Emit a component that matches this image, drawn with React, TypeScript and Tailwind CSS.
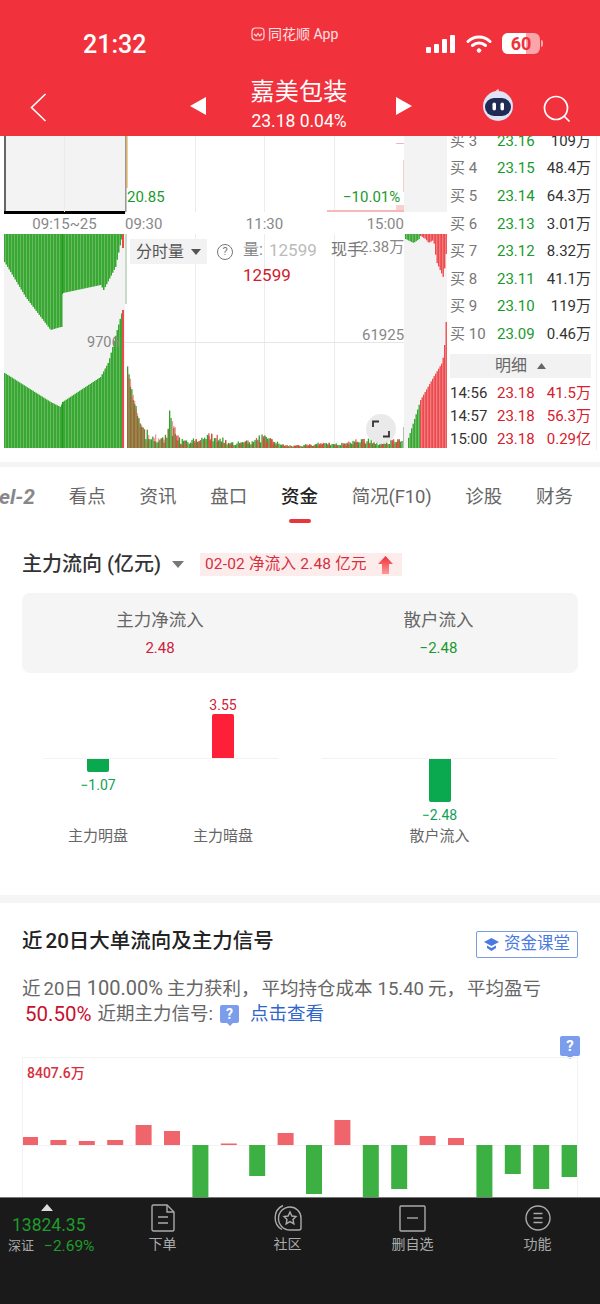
import React from "react";

function rng(seed: number) {
  let s = seed;
  return () => {
    s = (s * 16807) % 2147483647;
    return (s - 1) / 2147483646;
  };
}
function lerp(pts: number[][], x: number) {
  if (x <= pts[0][0]) return pts[0][1];
  for (let i = 1; i < pts.length; i++) {
    if (x <= pts[i][0]) {
      const [a, b] = pts[i - 1];
      const [c, d] = pts[i];
      return b + ((d - b) * (x - a)) / (c - a);
    }
  }
  return pts[pts.length - 1][1];
}
const range = (a: number, b: number, step: number) => {
  const r: number[] = [];
  for (let x = a; x < b; x += step) r.push(x);
  return r;
};

const GREEN = "#38a832";
const RED = "#ee4a4e";

function TopChart() {
  return (
    <svg width={443} height={78} viewBox="4 136 443 78" className="block">
      <rect x={4} y={136} width={123} height={78} fill="#f3f3f3" />
      <rect x={404} y={136} width={43} height={76} fill="#f3f3f3" />
      <rect x={4} y={136} width={2} height={76} fill="#666" />
      <rect x={4} y={211} width={121} height={3} fill="#000" />
      <rect x={64} y={136} width={1} height={76} fill="#ebebeb" />
      <rect x={125} y={136} width={1.5} height={76} fill="#999" />
      <rect x={126.5} y={136} width={1} height={52} fill="#e0a030" />
      {[195, 264, 334].map((x) => (
        <rect key={x} x={x} y={136} width={1} height={76} fill="#ececec" />
      ))}
      <rect x={327} y={210} width={77} height={2} fill="#f6b8b8" />
      <rect x={396} y={143} width={8} height={1} fill="#f4b6b6" />
      <rect x={403} y={160} width={1} height={32} fill="#f6cccc" />
      <rect x={396} y={205} width={8} height={5} fill="#f9d0d0" />
    </svg>
  );
}

function LowerChart() {
  const topGreen = [[4, 262], [25, 297], [50, 330], [60, 327], [61.5, 327], [62.5, 293], [100, 285], [103, 290], [115, 267], [120, 243], [122, 236]];
  const botGreen = [[4, 373], [50, 402], [60, 407], [62, 402], [100, 377], [108, 362], [120, 317], [122, 310]];
  const env = [[127, 96], [130, 70], [133, 51], [140, 25], [150, 15], [160, 12], [167, 14], [169, 41], [173, 25], [180, 10], [200, 10], [208, 15], [217, 14], [230, 6], [250, 8], [262, 15], [270, 10], [285, 3], [300, 3], [320, 6], [340, 5], [362, 11], [380, 6], [400, 11]];
  const r = rng(77);
  const vol = range(127, 402, 1.4).map((x) => {
    const e = lerp(env, x);
    const lo = x < 145 ? 0.85 : 0.4;
    return { x, g: e * (lo + (1 - lo) * r()), d: e * (lo - 0.1 + (1.1 - lo) * r()), red: x < 145 || r() > 0.45 };
  });
  return (
    <svg width={443} height={214} viewBox="4 234 443 214" className="block">
      <rect x={4} y={234} width={121} height={214} fill="#f3f3f3" />
      <rect x={404} y={234} width={43} height={214} fill="#f3f3f3" />
      {[195, 264, 334].map((x) => (
        <rect key={x} x={x} y={234} width={1} height={214} fill="#ececec" />
      ))}
      <rect x={125} y={342} width={279} height={1} fill="#e6e6e6" />
      {range(4, 122, 1.5).map((x) => (
        <g key={x}>
          <rect x={x} y={234} width={1.5} height={lerp(topGreen, x) - 234} fill={GREEN} />
          <rect x={x} y={lerp(botGreen, x)} width={1.5} height={448 - lerp(botGreen, x)} fill={GREEN} />
        </g>
      ))}
      <rect x={62} y={234} width={1} height={60} fill="#1f9a20" />
      <rect x={62} y={402} width={1} height={46} fill="#1f9a20" />
      <rect x={122} y={234} width={2} height={14} fill={RED} />
      <rect x={122} y={310} width={2} height={138} fill={RED} />
      <rect x={125.5} y={234} width={1} height={70} fill="#8fb88f" />
      {vol.map((v) => (
        <g key={v.x}>
          <rect x={v.x} y={448 - v.g} width={1.3} height={v.g} fill="#2f9e2a" />
          {v.red && <rect x={v.x} y={448 - v.d} width={1.3} height={v.d} fill="#ee3e3e" fillOpacity={v.x < 175 ? 0.55 : 0.9} />}
        </g>
      ))}
      <rect x={403} y={427} width={1} height={21} fill="#bbb" />
      {range(405, 420, 1.5).map((x) => (
        <g key={x}>
          <rect x={x} y={234} width={1.4} height={lerp([[405, 5], [413, 9], [420, 4]], x)} fill={GREEN} />
          {x > 407 && <rect x={x} y={lerp([[407, 441], [420, 400]], x)} width={1.4} height={448 - lerp([[407, 441], [420, 400]], x)} fill={GREEN} />}
        </g>
      ))}
      {range(420, 446, 1.5).map((x) => (
        <g key={x}>
          <rect x={x} y={234} width={1.4} height={lerp([[420, 2], [425, 5], [428, 9], [433, 6], [436, 28], [443, 44], [445.5, 20]], x)} fill={RED} />
          <rect x={x} y={lerp([[420, 400], [433, 377], [442, 362], [444, 345], [445, 322]], x)} width={1.4} height={448 - lerp([[420, 400], [433, 377], [442, 362], [444, 345], [445, 322]], x)} fill={RED} />
        </g>
      ))}
    </svg>
  );
}

function Triangle({ dir, cls }: { dir: "l" | "r" | "d" | "u"; cls: string }) {
  const p = { l: "16,0 16,18 0,9", r: "0,0 0,18 16,9", d: "0,0 16,0 8,12", u: "8,0 16,12 0,12" }[dir];
  const vb = dir === "l" || dir === "r" ? "0 0 16 18" : "0 0 16 12";
  return (
    <svg viewBox={vb} className={cls} fill="currentColor" preserveAspectRatio="none">
      <polygon points={p} />
    </svg>
  );
}

function Header() {
  return (
    <div className="h-[136px] shrink-0 bg-[#f1323c] text-white">
      <div className="flex h-[76px] items-start">
        <div className="w-[251px] pl-[83px] pt-[30px] text-[25px] font-medium leading-[30px]">21:32</div>
        <div className="flex w-[175px] items-center gap-[3px] pt-[25px] text-[14px] leading-[18px] text-white/85">
          <svg width={14} height={14} viewBox="0 0 14 14" fill="none" stroke="#ffd9d9" strokeWidth={1.2}>
            <rect x={1} y={1} width={12} height={12} rx={3.5} />
            <path d="M3 7l2.2 2L7 6.5 8.8 9 11 6.5" />
          </svg>
          <span>同花顺 App</span>
        </div>
        <div className="flex items-center pt-[33px]">
          <svg width={30} height={20} viewBox="0 0 30 20" fill="#fff">
            <rect x={0} y={13} width={5} height={6} rx={1} />
            <rect x={8} y={10} width={5} height={9} rx={1} />
            <rect x={16} y={5} width={5} height={14} rx={1} />
            <rect x={24} y={1} width={5} height={18} rx={1} />
          </svg>
          <svg width={26} height={20} viewBox="0 0 26 20" fill="none" stroke="#fff" strokeWidth={3} strokeLinecap="round" className="ml-[10px]">
            <path d="M2 7.5a16 16 0 0 1 22 0" />
            <path d="M6.5 11.5a10 10 0 0 1 13 0" />
            <circle cx={13} cy={16.5} r={1.8} fill="#fff" strokeWidth={1} />
          </svg>
          <div className="relative ml-[10px] flex h-[21px] w-[38px] items-center justify-center overflow-hidden rounded-[6px] bg-[#f9a5a9] text-[18px] font-bold leading-none text-[#f1323c]">
            <div className="absolute inset-y-0 left-0 w-[24px] bg-white" />
            <span className="relative">60</span>
          </div>
          <div className="ml-[1px] h-[7px] w-[2px] rounded-r-sm bg-[#f9a5a9]" />
        </div>
      </div>
      <div className="flex h-[60px] items-start">
        <svg width={17} height={29} viewBox="0 0 17 29" fill="none" stroke="#fff" strokeWidth={1.6} className="ml-[30px] mt-[17px]">
          <path d="M15.5 1L1.5 14.5 15.5 28" />
        </svg>
        <Triangle dir="l" cls="ml-[143px] mt-[21px] h-[18px] w-[16px]" />
        <div className="ml-[38px] flex w-[110px] flex-col items-center">
          <div className="mt-[1px] text-[24px] leading-[31px] tracking-[0.3px]">嘉美包装</div>
          <div className="mt-[1px] text-[17.5px] leading-[24px]">23.18 0.04%</div>
        </div>
        <Triangle dir="r" cls="ml-[42px] mt-[21px] h-[18px] w-[16px]" />
        <svg width={34} height={32} viewBox="0 0 34 32" className="ml-[69px] mt-[13px]">
          <path d="M15 4c0-2 1-3 3-3" stroke="#fbd" strokeWidth={1.5} fill="none" />
          <circle cx={17} cy={17} r={15} fill="#dfe3f4" />
          <rect x={4} y={9} width={26} height={18} rx={9} fill="#1f2a55" />
          <rect x={11.5} y={13.5} width={3.5} height={8} rx={1.75} fill="#fff" />
          <rect x={19.5} y={13.5} width={3.5} height={8} rx={1.75} fill="#fff" />
        </svg>
        <svg width={28} height={28} viewBox="0 0 28 28" fill="none" stroke="#fff" strokeWidth={1.7} className="ml-[28px] mt-[19px]">
          <circle cx={13} cy={13} r={11.5} />
          <path d="M21 21l5.5 5.5" />
        </svg>
      </div>
    </div>
  );
}

const book: [string, string, string][] = [
  ["3", "23.16", "109万"],
  ["4", "23.15", "48.4万"],
  ["5", "23.14", "64.3万"],
  ["6", "23.13", "3.01万"],
  ["7", "23.12", "8.32万"],
  ["8", "23.11", "41.1万"],
  ["9", "23.10", "119万"],
  ["10", "23.09", "0.46万"],
];
const deals = [
  ["14:56", "23.18", "41.5万"],
  ["14:57", "23.18", "56.3万"],
  ["15:00", "23.18", "0.29亿"],
];

function OrderBook() {
  return (
    <div className="h-[314px] w-[148px] overflow-hidden border-r border-[#f0f0f0] text-[15px]">
      <div className="-mt-[8.8px]">
        {book.map(([n, p, v]) => (
          <div key={n} className="flex h-[27.6px] items-center pl-[1px]">
            <span className="w-[47px] text-[#777]">买 {n}</span>
            <span className="text-[#1a9a2c]">{p}</span>
            <span className="ml-auto pr-[5px] text-[#333]">{v}</span>
          </div>
        ))}
      </div>
      <div className="ml-[1px] mt-[6px] flex h-[24px] w-[141px] items-center justify-center gap-[10px] bg-[#f2f2f2] text-[16px] text-[#666]">
        明细
        <Triangle dir="u" cls="h-[6px] w-[9px] text-[#666]" />
      </div>
      <div className="mt-[3.5px]">
        {deals.map(([t, p, v]) => (
          <div key={t} className="flex h-[23px] items-center pl-[1px]">
            <span className="w-[47px] text-[#333]">{t}</span>
            <span className="text-[#d6202c]">{p}</span>
            <span className="ml-auto pr-[5px] text-[#d6202c]">{v}</span>
          </div>
        ))}
      </div>
    </div>
  );
}

function ChartArea() {
  return (
    <div className="flex h-[314px] shrink-0 overflow-hidden">
      <div className="ml-[4px] mr-[2px] w-[443px]">
        <div className="relative h-[78px]">
          <TopChart />
          <span className="absolute left-[123px] top-[52px] text-[15px] leading-[18px] text-[#1a9a2c]">20.85</span>
          <span className="absolute left-[339px] top-[52px] text-[15px] leading-[18px] text-[#1a9a2c]">−10.01%</span>
        </div>
        <div className="flex h-[20px] items-center text-[15px] text-[#888]">
          <span className="w-[121px] pt-[1px] text-center">09:15~25</span>
          <div className="flex w-[279px] justify-between">
            <span>09:30</span>
            <span>11:30</span>
            <span>15:00</span>
          </div>
        </div>
        <div className="relative h-[214px]">
          <LowerChart />
          <div className="absolute left-[126px] top-[5px] flex h-[25px] w-[77px] items-center justify-center gap-[7px] bg-[#f2f2f2] text-[16px] text-[#555]">
            分时量
            <Triangle dir="d" cls="h-[6px] w-[10px] text-[#555]" />
          </div>
          <div className="absolute left-[213px] top-[10px] flex h-[16px] w-[16px] items-center justify-center rounded-full border border-[#777] text-[11px] text-[#777]">?</div>
          <span className="absolute left-[239px] top-[4px] text-[16px] leading-[24px] text-[#888]">量:</span>
          <span className="absolute left-[265px] top-[4px] text-[17px] leading-[24px] text-[#bbb]">12599</span>
          <span className="absolute left-[327px] top-[4px] text-[16px] leading-[24px] text-[#777]">现手:</span>
          <span className="absolute left-[356px] top-[1px] text-[15px] leading-[24px] text-[#888]">2.38万</span>
          <span className="absolute left-[239px] top-[29px] text-[17px] leading-[24px] text-[#d0202c]">12599</span>
          <span className="absolute left-[83px] top-[99px] text-[14.5px] leading-[20px] text-[#888]">9706</span>
          <span className="absolute left-[358px] top-[91px] text-[15px] leading-[20px] text-[#888]">61925</span>
          <div className="absolute left-[362px] top-[180px] flex h-[30px] w-[30px] items-center justify-center rounded-full bg-[#e8e8e8]/90">
            <svg width={18} height={18} viewBox="0 0 18 18" fill="none" stroke="#333" strokeWidth={1.8}>
              <path d="M1 7V1.500h6" />
              <path d="M17 11v5.500h-6" />
            </svg>
          </div>
        </div>
      </div>
      <OrderBook />
    </div>
  );
}

const tabs = ["看点", "资讯", "盘口", "资金", "简况(F10)", "诊股", "财务"];

function Tabs() {
  return (
    <div className="flex h-[57px] shrink-0 gap-[33.75px] overflow-hidden pt-[16px] text-[18.5px] leading-[28px] text-[#666]">
      <div className="flex w-[35px] shrink-0 justify-end overflow-hidden">
        <span className="whitespace-nowrap text-[21px] font-bold italic text-[#888]">Level-2</span>
      </div>
      {tabs.map((t) => (
        <div key={t} className="flex shrink-0 flex-col items-center">
          <span className={t === "资金" ? "font-medium text-[#222]" : t === "简况(F10)" ? "tracking-[-0.15px]" : ""}>{t}</span>
          {t === "资金" && <div className="mt-[8px] h-[4px] w-[22px] rounded-full bg-[#e8373c]" />}
        </div>
      ))}
    </div>
  );
}

type Col = { value: string; up: boolean; h: number; label: string };

function BarGroup({ cols }: { cols: Col[] }) {
  return (
    <div className="flex w-[235px] flex-col">
      <div className="flex h-[63px] items-end justify-center border-b border-[#f3f3f3]">
        {cols.map((c) => (
          <div key={c.label} className="flex w-[125px] shrink-0 flex-col items-center">
            {c.up && (
              <>
                <span className="text-[14px] leading-[20px] text-[#d0213a]">{c.value}</span>
                <div className="mt-[-1px] w-[22px] shrink-0 rounded-t-[2px] bg-[#fe2038]" style={{ height: c.h }} />
              </>
            )}
          </div>
        ))}
      </div>
      <div className="flex h-[63px] justify-center">
        {cols.map((c) => (
          <div key={c.label} className="flex h-[80px] w-[125px] shrink-0 flex-col items-center">
            {!c.up && (
              <>
                <div className="w-[22px] shrink-0 rounded-b-[2px] bg-[#0aa84f]" style={{ height: c.h }} />
                <span className="mt-[3px] text-[14px] leading-[20px] text-[#0f9f55]">{c.value}</span>
              </>
            )}
          </div>
        ))}
      </div>
      <div className="mt-[4px] flex h-[20px] justify-center">
        {cols.map((c) => (
          <div key={c.label} className="w-[125px] shrink-0 text-center text-[15px] leading-[20px] text-[#666]">
            {c.label}
          </div>
        ))}
      </div>
    </div>
  );
}

function FlowSection() {
  return (
    <div className="h-[371px] shrink-0 pt-[29px]">
      <div className="mx-[22px] flex h-[23px] items-center">
        <span className="text-[20px] font-medium leading-[23px] text-[#333]">主力流向 (亿元)</span>
        <Triangle dir="d" cls="ml-[11px] h-[7px] w-[12px] text-[#777]" />
        <div className="ml-[16px] flex h-[23px] w-[202px] items-center gap-[11px] bg-[#fdecec] pl-[5px] text-[15.5px] tracking-[0.2px] text-[#d6303e]">
          <span className="whitespace-nowrap">02-02 净流入 2.48 亿元</span>
          <svg width={15} height={18} viewBox="0 0 15 18">
            <defs>
              <linearGradient id="arr" x1="0" y1="0" x2="0" y2="1">
                <stop offset="0" stopColor="#ef2f38" />
                <stop offset="1" stopColor="#f99" />
              </linearGradient>
            </defs>
            <path d="M7.5 0L15 8h-4v10H4V8H0z" fill="url(#arr)" />
          </svg>
        </div>
      </div>
      <div className="mx-[22px] mt-[17px] grid h-[80px] grid-cols-2 rounded-[8px] bg-[#f5f5f5] text-center">
        <div className="pt-[15px]">
          <div className="-ml-[2px] text-[17.5px] leading-[24px] text-[#666]">主力净流入</div>
          <div className="-ml-[2px] mt-[6px] text-[15px] leading-[20px] text-[#d0213a]">2.48</div>
        </div>
        <div className="pt-[15px]">
          <div className="ml-[-1px] text-[17.5px] leading-[24px] text-[#666]">散户流入</div>
          <div className="ml-[-1px] mt-[6px] text-[15px] leading-[20px] text-[#1a9a2c]">−2.48</div>
        </div>
      </div>
      <div className="ml-[43px] mt-[23px] flex gap-[44px]">
        <BarGroup
          cols={[
            { value: "−1.07", up: false, h: 13, label: "主力明盘" },
            { value: "3.55", up: true, h: 44, label: "主力暗盘" },
          ]}
        />
        <BarGroup cols={[{ value: "−2.48", up: false, h: 43, label: "散户流入" }]} />
      </div>
    </div>
  );
}

const big = [8, 5, 4, 5, 20, 14, -60, 1.5, -31, 12, -49, 25, -60, -44, 9, 7, -60, -29, -44, -32];

function Signal({ cls }: { cls: string }) {
  return (
    <div className={"relative flex items-center justify-center rounded-[2px] bg-[#7c9cec] font-bold text-white " + cls}>
      ?
      <svg width={6} height={3} viewBox="0 0 6 3" className="absolute -bottom-[3px] left-1/2 -ml-[3px]">
        <polygon points="0,0 6,0 3,3" fill="#7c9cec" />
      </svg>
    </div>
  );
}

const COMMA = "\uFF0C";

function BigOrderSection() {
  return (
    <div className="flex-1 overflow-hidden">
      <div className="mx-[22px] mt-[28px] flex h-[27px] items-start justify-between">
        <span className="text-[20.5px] font-medium leading-[20px] text-[#222]">
          近<span className="ml-[3px]">20</span>日大单流向及主力信号
        </span>
        <div className="flex h-[27px] w-[102px] items-center gap-[5px] rounded-[2px] border border-[#7b9be0] pl-[7px] text-[16.5px] text-[#4a7ae0]">
          <svg width={15} height={15} viewBox="0 0 15 15" fill="#4a7ae0">
            <polygon points="7.5,1 15,5 7.5,9 0,5" />
            <path d="M3 8.5l4.5 2.4L12 8.5V11l-4.5 3L3 11z" />
          </svg>
          资金课堂
        </div>
      </div>
      <div className="mx-[22px] mt-[17.5px] text-[18.5px] leading-[25px] text-[#666]">
        <div className="whitespace-nowrap">
          近<span className="ml-[3px]">20</span>日<span className="ml-[4px] text-[20px]">100.00%</span>
          <span className="ml-[4px]">主力获利{COMMA}</span>
          <span className="ml-[2px]">平均持仓成本</span>
          <span className="ml-[5px]">15.40</span>
          <span className="ml-[4px]">元{COMMA}</span>
          <span className="ml-[2px]">平均盈亏</span>
        </div>
        <div className="flex items-center whitespace-nowrap">
          <span className="ml-[3px] text-[20.5px] text-[#c8102e]">50.50%</span>
          <span className="ml-[6px]">近期主力信号:</span>
          <Signal cls="ml-[7px] h-[18px] w-[19px] text-[14px]" />
          <span className="ml-[11px] text-[#2f66cc]">点击查看</span>
        </div>
      </div>
      <div className="mr-[20px] mt-[9.5px] flex justify-end">
        <Signal cls="h-[20px] w-[20px] text-[15px]" />
      </div>
      <div className="relative mx-[22px] mt-[1px] h-[141px] border-x border-t border-[#f2f2f2]">
        <span className="absolute left-[4px] top-[5px] text-[14px] font-medium leading-[20px] text-[#d6303e]">8407.6万</span>
        <svg width={554} height={141} viewBox="1 0 554 141" className="block">
          <rect x={1} y={87} width={554} height={1} fill="#f3f3f3" />
          {big.map((v, i) => {
            const x = i * 28.4;
            return v > 0 ? (
              <rect key={i} x={x} y={87 - v} width={16} height={v} fill="#f0646c" />
            ) : (
              <rect key={i} x={x} y={87} width={16} height={-v} fill="#3cb043" />
            );
          })}
        </svg>
      </div>
    </div>
  );
}

function Footer() {
  const stroke = { fill: "none", stroke: "#aaa", strokeWidth: 1.4 };
  const items: [string, React.ReactNode][] = [
    [
      "下单",
      <svg width={24} height={28} viewBox="0 0 24 28" {...stroke}>
        <path d="M1 2.500A1.500 1.500 0 0 1 2.500 1H16l7 7v17.500a1.500 1.500 0 0 1-1.500 1.500h-19A1.500 1.500 0 0 1 1 25.500z" />
        <path d="M16 1v7h7M7 13h10M7 19h10" />
      </svg>,
    ],
    [
      "社区",
      <svg width={30} height={28} viewBox="0 0 30 28" {...stroke}>
        <path d="M17 3a11 11 0 0 1 11 11v10a2 2 0 0 1-2 2H17a11.500 11.500 0 0 1 0-23z" />
        <path d="M10 1.500a13.500 13.500 0 0 0-1 24" />
        <polygon points="17,8 18.900,12 23,12.500 20,15.500 20.800,19.800 17,17.600 13.200,19.800 14,15.500 11,12.500 15.100,12" />
      </svg>,
    ],
    [
      "删自选",
      <svg width={27} height={27} viewBox="0 0 27 27" {...stroke}>
        <rect x={1} y={1} width={25} height={25} rx={1} />
        <path d="M8 13h11" />
      </svg>,
    ],
    [
      "功能",
      <svg width={26} height={26} viewBox="0 0 26 26" {...stroke}>
        <circle cx={13} cy={13} r={12} />
        <path d="M8.500 8.500h9M8.500 13h9M8.500 17.500h9" />
      </svg>,
    ],
  ];
  return (
    <div className="flex h-[107px] shrink-0 border-t border-[#777] bg-[#1a1a1a]">
      <div className="relative w-[100px] shrink-0">
        <Triangle dir="u" cls="absolute left-[41px] top-[6px] h-[7px] w-[12px] text-[#ddd]" />
        <div className="absolute left-[12px] top-[15px] text-[17.5px] leading-[24px] text-[#1f9c2b]">13824.35</div>
        <div className="absolute left-[8px] top-[38px] flex items-center whitespace-nowrap leading-[20px]">
          <span className="text-[13px] text-[#aaa]">深证</span>
          <span className="ml-[10px] text-[15.5px] text-[#1f9c2b]">−2.69%</span>
        </div>
      </div>
      {items.map(([label, icon]) => (
        <div key={label} className="flex w-[125px] flex-col items-center">
          <div className="mt-[6px] flex h-[28px] items-center justify-center">{icon}</div>
          <span className="mt-[2px] text-[14px] leading-[20px] text-[#aaa]">{label}</span>
        </div>
      ))}
    </div>
  );
}

export default function App() {
  return (
    <div className="flex h-[1304px] w-[600px] flex-col overflow-hidden bg-white font-[Roboto,'Noto_Sans_CJK_SC',sans-serif]">
      <Header />
      <ChartArea />
      <div className="mt-[12px] h-[5px] shrink-0 bg-[#f4f4f4]" />
      <Tabs />
      <FlowSection />
      <div className="h-[8px] shrink-0 bg-[#f5f5f5]" />
      <BigOrderSection />
      <Footer />
    </div>
  );
}
